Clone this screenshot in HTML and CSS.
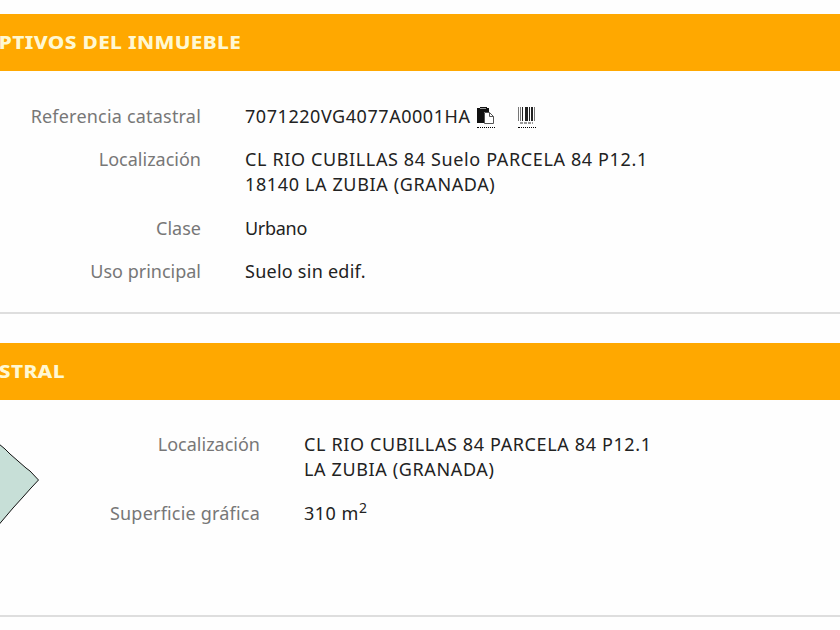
FILE: index.html
```html
<!DOCTYPE html>
<html lang="es">

<head>
    <meta charset="UTF-8" />
    <meta name="viewport" content="width=device-width, initial-scale=1.0" />
    <title>Datos del inmueble</title>
    <link rel="stylesheet" href="styles.css">
</head>

<body>
    <div class="panel panel-inmueble">
        <h2 class="panel-heading"><span>PTIVOS DEL INMUEBLE</span></h2>
        <div class="panel-body">
            <div class="row">
                <span class="label label-wide">Referencia catastral</span>
                <div class="value">
                    <span class="referencia">7071220VG4077A0001HA</span>
                    <span class="icon icon-copy">
                        <svg width="18" height="18" viewBox="0 0 18 18">
                            <path d="M0 1h3V0h7v1h2v4H7v11H0z" fill="#111" />
                            <path d="M3 1.500h6" stroke="#999" />
                            <path d="M7.500 5.500h5l4 4v7h-9z" fill="#fff" stroke="#555" />
                            <path d="M12.500 5.500v4h4" fill="none" stroke="#555" />
                        </svg>
                    </span>
                    <span class="icon icon-barcode">
                        <svg width="18" height="18" viewBox="0 0 18 18">
                            <path d="M0 0h1v14H0zM2 0h1v14H2zM16 0h1v14h-1z" fill="#777" />
                            <path d="M4 0h1v14H4zM7 0h3v14H7zM11 0h1v14h-1zM13 0h2v14h-2z" fill="#222" />
                            <path d="M2 16h13" stroke="#333" stroke-dasharray="3 1" />
                        </svg>
                    </span>
                </div>
            </div>
            <div class="row">
                <span class="label">Localización</span>
                <div class="value upper">CL RIO CUBILLAS 84 Suelo PARCELA 84 P12.1<br>18140 LA ZUBIA (GRANADA)</div>
            </div>
            <div class="row">
                <span class="label">Clase</span>
                <div class="value clase">Urbano</div>
            </div>
            <div class="row">
                <span class="label">Uso principal</span>
                <div class="value">Suelo sin edif.</div>
            </div>
        </div>
    </div>

    <div class="panel panel-parcela">
        <h2 class="panel-heading"><span>STRAL</span></h2>
        <div class="panel-body">
            <svg class="croquis" width="40" height="90" viewBox="0 0 40 90">
                <path d="M-1 4L5 9L10 14L26 28L30 31L38.500 40L31 48L23 57L13 68L-1 84.500z" fill="#c7dfd7" stroke="#111" />
            </svg>
            <div class="datos">
                <div class="row">
                    <span class="label">Localización</span>
                    <div class="value upper">CL RIO CUBILLAS 84 PARCELA 84 P12.1<br>LA ZUBIA (GRANADA)</div>
                </div>
                <div class="row">
                    <span class="label label-wide">Superficie gráfica</span>
                    <div class="value superficie">310 m<sup>2</sup></div>
                </div>
            </div>
        </div>
    </div>
</body>

</html>
```
FILE: styles.css
```css
* {
    box-sizing: border-box;
}

body {
    margin: 0;
    padding-top: 14px;
    background: #fefefe;
    font-family: "Noto Sans", sans-serif;
    font-size: 18px;
    line-height: 25px;
    color: #222;
    overflow: hidden;
}

.panel {
    border-bottom: 2px solid #dedede;
    margin-bottom: 29px;
}

.panel-inmueble {
    height: 300px;
}

.panel-parcela {
    height: 274px;
}

.panel-heading {
    margin: 0;
    height: 57px;
    background: #ffa800;
    color: #fff8d2;
    font-size: 17.5px;
    font-weight: 800;
    line-height: 57px;
}

/* letra ancha en los títulos */
.panel-heading span {
    display: inline-block;
    transform: scaleX(1.19);
    transform-origin: left;
    letter-spacing: 0.3px;
    text-indent: -1px;
}

.row {
    display: flex;
    gap: 44px;
    margin-bottom: 18px;
}

.label {
    flex: none;
    width: 201px;
    text-align: right;
    color: #777;
}

.label-wide {
    letter-spacing: 0.2px;
}

.value {
    white-space: nowrap;
    letter-spacing: 0.25px;
}

.upper {
    letter-spacing: 0.63px;
}

.referencia {
    letter-spacing: 0.55px;
}

.clase {
    letter-spacing: -0.3px;
}

.superficie {
    letter-spacing: 0.5px;
}

.panel-inmueble .panel-body {
    padding-top: 33px;
}

.panel-inmueble .row:nth-child(1) {
    height: 25px;
}

.panel-inmueble .row:nth-child(2) {
    margin-bottom: 19px;
}

.panel-parcela .panel-body {
    display: flex;
    padding-top: 32px;
}

.panel-parcela .label {
    width: 220px;
}

.panel-parcela .row:first-child {
    margin-bottom: 19px;
}

.croquis {
    flex: none;
    margin-top: 8px;
}

.icon {
    display: inline-block;
    height: 21px;
    border-bottom: 1px dotted #000;
    vertical-align: top;
    line-height: 0;
    margin-top: 3px;
}

.icon-copy {
    margin-left: 2px;
}

.icon-barcode {
    margin-left: 18px;
}

sup {
    font-size: 14px;
    line-height: 0;
}
```
